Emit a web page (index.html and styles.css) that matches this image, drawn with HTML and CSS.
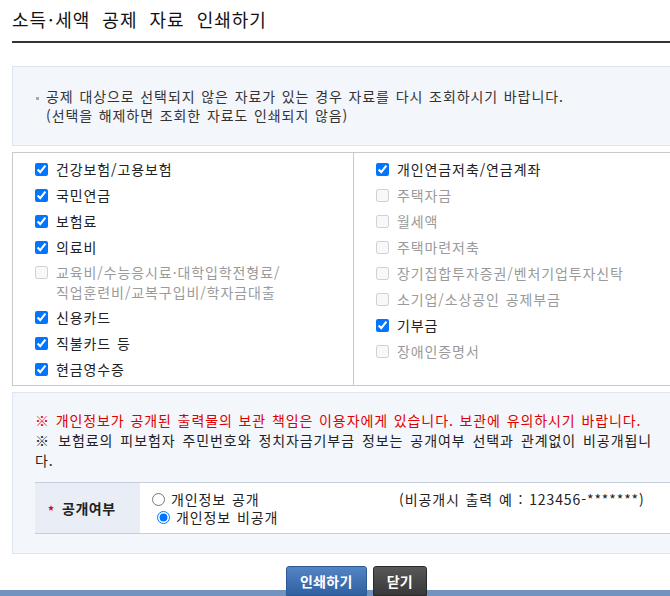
FILE: index.html
```html
<!DOCTYPE html>
<html lang="ko">
<head>
<meta charset="utf-8">
<title>소득·세액 공제 자료 인쇄하기</title>
<link rel="stylesheet" href="styles.css">
</head>
<body>
<div class="page">
  <h1 class="title">소득<span class="dot">·</span>세액 공제 자료 인쇄하기</h1>

  <div class="info">
    <p><span class="bullet"></span>공제 대상으로 선택되지 않은 자료가 있는 경우 자료를 다시 조회하시기 바랍니다.</p>
    <p class="sub">(선택을 해제하면 조회한 자료도 인쇄되지 않음)</p>
  </div>

  <div class="checks">
    <ul class="col">
      <li><label><input type="checkbox" checked><span>건강보험/고용보험</span></label></li>
      <li><label><input type="checkbox" checked><span>국민연금</span></label></li>
      <li><label><input type="checkbox" checked><span>보험료</span></label></li>
      <li><label><input type="checkbox" checked><span>의료비</span></label></li>
      <li class="two"><label class="off"><input type="checkbox" disabled><span>교육비/수능응시료·대학입학전형료/<br>직업훈련비/교복구입비/학자금대출</span></label></li>
      <li><label><input type="checkbox" checked><span>신용카드</span></label></li>
      <li><label><input type="checkbox" checked><span>직불카드 등</span></label></li>
      <li><label><input type="checkbox" checked><span>현금영수증</span></label></li>
    </ul>
    <ul class="col right">
      <li><label><input type="checkbox" checked><span>개인연금저축/연금계좌</span></label></li>
      <li><label class="off"><input type="checkbox" disabled><span>주택자금</span></label></li>
      <li><label class="off"><input type="checkbox" disabled><span>월세액</span></label></li>
      <li><label class="off"><input type="checkbox" disabled><span>주택마련저축</span></label></li>
      <li><label class="off"><input type="checkbox" disabled><span>장기집합투자증권/벤처기업투자신탁</span></label></li>
      <li><label class="off"><input type="checkbox" disabled><span>소기업/소상공인 공제부금</span></label></li>
      <li><label><input type="checkbox" checked><span>기부금</span></label></li>
      <li><label class="off"><input type="checkbox" disabled><span>장애인증명서</span></label></li>
    </ul>
  </div>

  <div class="notice">
    <p class="red">※ 개인정보가 공개된 출력물의 보관 책임은 이용자에게 있습니다. 보관에 유의하시기 바랍니다.</p>
    <p class="justify">※ 보험료의 피보험자 주민번호와 정치자금기부금 정보는 공개여부 선택과 관계없이 비공개됩니다.</p>

    <div class="pubtable">
      <div class="th">
        <svg class="star" viewBox="0 0 10 10" aria-hidden="true"><polygon points="5,0 6.3,3.4 10,3.6 7.1,5.9 8.1,9.6 5,7.5 1.9,9.6 2.9,5.9 0,3.6 3.7,3.4" fill="#c8102e"/></svg>
        <span>공개여부</span>
      </div>
      <div class="td">
        <div class="r1">
          <label class="radio"><input type="radio" name="pub"><span>개인정보 공개</span></label>
          <span class="example">(비공개시 출력 예 : 123456-*******)</span>
        </div>
        <div class="r2">
          <label class="radio"><input type="radio" name="pub" checked><span>개인정보 비공개</span></label>
        </div>
      </div>
    </div>
  </div>

  <div class="buttons">
    <button type="button" class="btn blue">인쇄하기</button>
    <button type="button" class="btn dark">닫기</button>
  </div>
</div>
<div class="bar"></div>
</body>
</html>
```
FILE: styles.css
```css
* { box-sizing: border-box; }
html, body { margin: 0; padding: 0; }
body {
  width: 670px;
  height: 596px;
  overflow: hidden;
  background: #fff;
  font-family: "Noto Sans CJK KR", "Noto Sans", sans-serif;
  font-size: 14px;
  letter-spacing: 0.9px;
  word-spacing: 1px;
  color: #222;
}
.page { width: 689px; margin-left: 12px; }

.title {
  margin: 0;
  padding: 8px 0 11px;
  font-size: 18px;
  line-height: 22px;
  font-weight: normal;
  color: #111;
  letter-spacing: 1px;
  word-spacing: 6px;
  border-bottom: 2px solid #333;
}
.title .dot { margin: 0 1px; }

.info {
  margin-top: 23px;
  padding: 20px 20px 20px 23px;
  background: #f3f6fb;
  border: 1px solid #dde6f0;
}
.info p { margin: 0; line-height: 19px; color: #333; }
.bullet {
  display: inline-block;
  width: 3px;
  height: 3px;
  background: #aaa;
  margin-right: 7px;
  vertical-align: middle;
}
.info .sub { padding-left: 10px; }

.checks {
  margin-top: 6px;
  display: grid;
  grid-template-columns: 340px 1fr;
  border: 1px solid #c9c9c9;
}
.col {
  list-style: none;
  margin: 0;
  padding: 7px 0 7px 22px;
  display: flex;
  flex-direction: column;
  gap: 8px;
}
.col.right { border-left: 1px solid #c9c9c9; }
.col label { display: flex; align-items: flex-start; line-height: 18px; color: #222; }
.col input { margin: 3px 8px 0 0; width: 13px; height: 13px; flex: none; }
.col .off { color: #9a9a9a; }
.col .two { margin: -2px 0; }
.col .two label { line-height: 20px; }
.col .two input { margin-top: 4px; }

.notice {
  margin-top: 6px;
  padding: 17px 22px 19px 22px;
  background: #f3f6fb;
  border: 1px solid #dde6f0;
}
.notice p { margin: 0; line-height: 20px; color: #222; }
.notice .red { color: #e00000; }
.notice .justify { text-align: justify; width: 617px; }

.pubtable {
  margin-top: 12px;
  display: flex;
  background: #fff;
  border-top: 1px solid #c5cedb;
  border-bottom: 1px solid #c5cedb;
}
.pubtable .th {
  width: 105px;
  flex: none;
  display: flex;
  align-items: center;
  padding-left: 13px;
  background: #e9edf5;
  font-weight: bold;
  letter-spacing: 0.5px;
  color: #222;
}
.star { width: 6px; height: 6px; margin-right: 8px; flex: none; }
.pubtable .td { flex: 1; padding: 7px 12px; line-height: 18px; color: #222; }
.r1, .r2 { display: flex; align-items: center; }
.radio { display: flex; align-items: center; }
.radio input { margin: 0 6px 0 0; width: 13px; height: 13px; flex: none; }
.r1 .radio { width: 247px; flex: none; }
.r2 .radio { margin-left: 5px; }

.buttons {
  display: flex;
  justify-content: center;
  gap: 6px;
  margin-top: 12px;
  height: 24px;
}
.btn {
  position: relative;
  z-index: 1;
  height: 30px;
  padding: 0 13px;
  border-radius: 3px 3px 0 0;
  font-family: inherit;
  font-size: 14px;
  font-weight: bold;
  letter-spacing: 0.3px;
  line-height: 28px;
  color: #fff;
  cursor: pointer;
}
.btn.blue { background: linear-gradient(#5384c6, #2f609f); border: 1px solid #2c5a94; }
.btn.dark { background: linear-gradient(#585858, #383838); border: 1px solid #2a2a2a; }

.bar { height: 6px; background: #7293bf; width: 100%; }
```
